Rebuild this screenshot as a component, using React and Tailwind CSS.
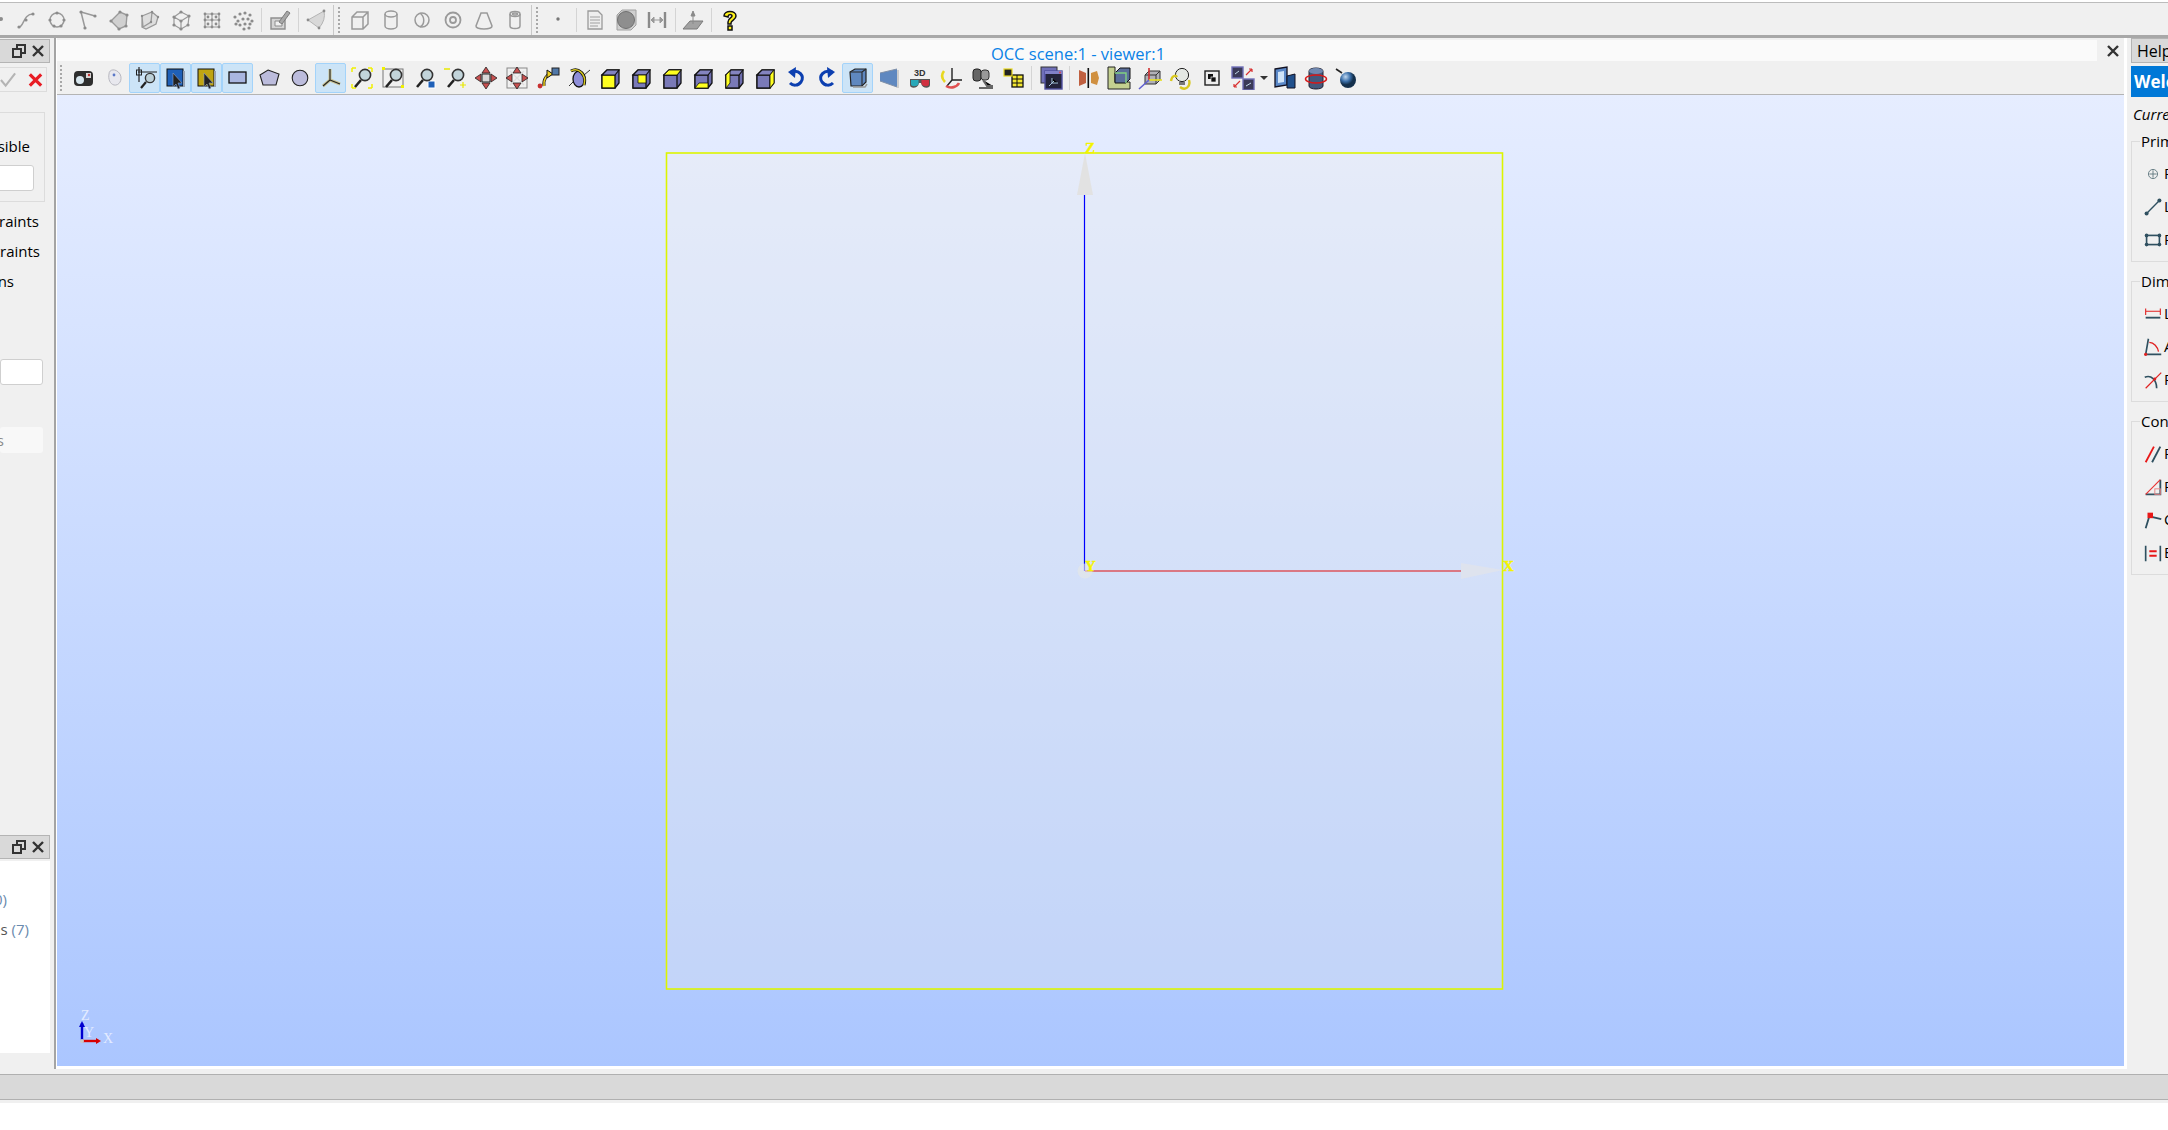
import React from 'react';

// Base wrapper for the 24px toolbar pictures
const Ico = ({ children, size = 24, className = '' }) => (
  <svg width={size} height={size} viewBox="0 0 24 24" className={className}>
    {children}
  </svg>
);

const Dots = ({ pts, fill = '#8c8c8c', r = 1.6 }) =>
  pts.map(([x, y], i) => <circle key={i} cx={x} cy={y} r={r} fill={fill} />);

const Mag = ({ children }) => (
  <Ico>
    {children}
    <line x1="5" y1="21" x2="11" y2="14" stroke="#222" strokeWidth="2.6" />
    <circle cx="15" cy="9" r="5.6" fill="#c2d4da" stroke="#333" strokeWidth="1.6" />
  </Ico>
);

const ViewCube = ({ hl, front = '#7a7ab8' }) => (
  <Ico>
    <path d="M4 9 L9 4 H21 V17 L17 22 H4 Z" fill="#6e6eae" stroke="#111" strokeWidth="1.3" />
    <rect x="4" y="9" width="13" height="13" fill={front} stroke="#111" strokeWidth="1.3" />
    <path d="M4 9 L9 4 H21 L17 9 Z" fill="#8484c0" stroke="#111" strokeWidth="1.1" />
    {hl && <path d={hl} fill="#ffff20" stroke="#111" strokeWidth="0.8" />}
  </Ico>
);

const Cursor = () => (
  <path d="M9 7 L9 21 L12 18 L14 23 L16 22 L14 17 L18 17 Z" fill="#222" stroke="#8fa3c8" strokeWidth="0.6" />
);

const grayLine = { stroke: '#9a9a9a', strokeWidth: 1.5, fill: 'none' };

// Disabled sketch and primitive tools on the main toolbar
const top = {
  dot: <Ico><circle cx="18" cy="11" r="2" fill="#8c8c8c" /></Ico>,
  spline: <Ico><path d="M5 19 C10 19 9 6 19 6" {...grayLine} /><Dots pts={[[5, 19], [12, 12], [19, 6]]} /></Ico>,
  circle: <Ico><circle cx="12" cy="12" r="7" {...grayLine} /><Dots pts={[[12, 5], [5, 12], [19, 12], [9, 18], [16, 18]]} /></Ico>,
  poly: <Ico><path d="M5 4 L9 20 M5 4 L19 8" {...grayLine} /><Dots pts={[[5, 4], [9, 20], [19, 8]]} /></Ico>,
  face: <Ico><path d="M4 13 L13 4 L20 7 L19 18 L12 21 Z" fill="#d0d0d0" stroke="#9a9a9a" strokeWidth="1.4" /><Dots pts={[[4, 13], [13, 4], [20, 7], [19, 18], [12, 21]]} /></Ico>,
  shell: <Ico><path d="M4 8 L14 4 L20 9 L18 16 L8 21 L4 19 Z M4 8 L5 19 M14 4 L13 14 L5 19" fill="#dedede" stroke="#9a9a9a" strokeWidth="1.3" /><Dots pts={[[4, 8], [14, 4], [20, 9], [13, 14]]} r={1.2} /></Ico>,
  solid: <Ico><path d="M5 9 L12 4 L20 8 L19 17 L12 21 L5 17 Z M5 9 L12 13 L20 8 M12 13 V21" {...grayLine} strokeWidth="1.2" /><Dots pts={[[5, 9], [12, 4], [20, 8], [19, 17], [12, 21], [5, 17], [12, 13]]} /></Ico>,
  comp: <Ico><path d="M5 6 H19 V19 H5 Z M5 12 H19 M12 6 V19" {...grayLine} strokeWidth="1.1" /><Dots pts={[[5, 6], [12, 6], [19, 6], [5, 12], [12, 12], [19, 12], [5, 19], [12, 19], [19, 19], [8, 9], [16, 9], [8, 16], [16, 16]]} r={1.4} /></Ico>,
  cloud: <Ico><Dots pts={[[4, 9], [9, 6], [14, 5], [19, 7], [7, 13], [12, 11], [17, 11], [21, 13], [9, 17], [14, 16], [19, 16], [13, 21], [18, 20], [5, 16]]} r={1.6} /></Ico>,
  edit: <Ico><path d="M3 10 H17 V21 H3 Z" fill="#d4d4d4" stroke="#8e8e8e" strokeWidth="1.4" /><path d="M7 13 H14 V18 H7 Z" fill="#f0f0f0" stroke="#8e8e8e" /><path d="M11 14 L19 3 L22 5 L14 16 Z" fill="#a8a8a8" stroke="#7c7c7c" /></Ico>,
  fan: <Ico><path d="M3 12 L19 3 Q21 12 14 20 Z" fill="#d8d8d8" stroke="#b4b4b4" /><Dots pts={[[3, 12], [19, 3], [14, 20]]} r={1.4} /></Ico>,
  box: <Ico><path d="M4 9 L9 4 H20 V16 L15 21 H4 Z M4 9 H15 V21 M15 9 L20 4" {...grayLine} /></Ico>,
  cyl: <Ico><ellipse cx="12" cy="6" rx="6" ry="3" {...grayLine} /><path d="M6 6 V18 A6 3 0 0 0 18 18 V6" {...grayLine} /></Ico>,
  sphere: <Ico><circle cx="12" cy="12" r="7" {...grayLine} /><path d="M10 5 C15 9 15 16 10 19" {...grayLine} /></Ico>,
  torus: <Ico><circle cx="12" cy="12" r="7.5" {...grayLine} strokeWidth="1.8" /><circle cx="12" cy="12" r="3" {...grayLine} strokeWidth="1.8" /></Ico>,
  cone: <Ico><path d="M9 5 H15 L20 18 A8 3 0 0 1 4 18 Z" {...grayLine} /></Ico>,
  tube: <Ico><ellipse cx="12" cy="6" rx="5" ry="2.5" {...grayLine} /><ellipse cx="12" cy="6" rx="2.5" ry="1" {...grayLine} /><path d="M7 6 V18 A5 2.5 0 0 0 17 18 V6" {...grayLine} /></Ico>,
  vertex: <Ico><circle cx="12" cy="11" r="1.7" fill="#777" /></Ico>,
  doc: <Ico><path d="M5 3 H15 L19 7 V21 H5 Z" fill="#eeeeee" stroke="#9a9a9a" strokeWidth="1.3" /><path d="M7 9 H17 M7 12 H17 M7 15 H17 M7 18 H15" stroke="#a0a0a0" /></Ico>,
  fit: <Ico><path d="M3 7 L8 2 H22 V17 L17 22 H3 Z" fill="#cfcfcf" stroke="#a0a0a0" /><circle cx="12" cy="12" r="8.5" fill="#8e8e8e" stroke="#707070" /></Ico>,
  dim: <Ico><path d="M4 4 V20 M20 4 V20" stroke="#8a8a8a" strokeWidth="2.4" /><path d="M6 12 H18 M6 12 L9 9 V15 Z M18 12 L15 9 V15 Z" stroke="#9a9a9a" fill="#9a9a9a" /></Ico>,
  plane: <Ico><path d="M2 21 L9 13 H22 L16 21 Z" fill="#a2a2a2" stroke="#7a7a7a" /><path d="M12 16 V5 M12 3 L10 8 H14 Z" stroke="#8a8a8a" fill="#8a8a8a" /></Ico>,
  help: <Ico><path d="M6 8 C6 2 18 2 18 8 C18 12 13 12 13 15 V16 H10 V14 C10 10 14 10 14 8 C14 6 10 6 10 9 Z M10 18 H14 V22 H10 Z" fill="#fff21a" stroke="#111" strokeWidth="1.5" /></Ico>,
};

// Icons of the 3D viewer toolbar
const view = {
  dump: <Ico><rect x="3" y="5" width="19" height="15" rx="4" fill="#2e2e2e" /><circle cx="9" cy="14" r="4" fill="#d7e6ee" /><rect x="15" y="7" width="5" height="5" fill="#d8d8d8" /><circle cx="18" cy="9" r="1.2" fill="#c03030" /></Ico>,
  mouse: <Ico><path d="M7 8 C7 3 14 2 18 8 C21 14 17 20 12 19 C8 18 6 13 7 8 Z" fill="#e8e8ee" stroke="#b8b8c0" /><circle cx="12" cy="9" r="1.4" fill="#5b78c8" /></Ico>,
  area: <Ico><path d="M5 6 H24 M6 1 V16" stroke="#222" strokeWidth="1.2" /><rect x="3.5" y="4" width="5" height="5" fill="none" stroke="#222" /><line x1="8" y1="22" x2="13" y2="16" stroke="#222" strokeWidth="2.2" /><circle cx="17" cy="12" r="4.6" fill="#bcd0d8" stroke="#333" strokeWidth="1.4" /></Ico>,
  selBlue: <Ico><rect x="3" y="3" width="16" height="17" fill="#1f60b8" stroke="#111" /><rect x="19" y="5" width="2" height="16" fill="#9aa4b4" /><Cursor /></Ico>,
  selGold: <Ico><rect x="3" y="3" width="16" height="17" fill="#bfa412" stroke="#111" /><rect x="19" y="5" width="2" height="16" fill="#9aa4b4" /><Cursor /></Ico>,
  rect: <Ico><rect x="3" y="6" width="17" height="11" fill="#a9b6e0" stroke="#111" strokeWidth="1.3" /></Ico>,
  penta: <Ico><path d="M11 4 L22 8 L19 19 H6 L3 9 Z" fill="#bcbcdc" stroke="#222" strokeWidth="1.1" /></Ico>,
  disk: <Ico><circle cx="12" cy="12" r="7.8" fill="#bcbcdc" stroke="#222" strokeWidth="1.1" /></Ico>,
  axes: <Ico><path d="M11 14 V3 M11 14 L21 18 M11 14 L4 20" stroke="#c8c090" strokeWidth="3" /><path d="M11 14 V3 M11 14 L21 18 M11 14 L4 20" stroke="#222" strokeWidth="1.1" /></Ico>,
  fitAll: <Mag><path d="M2 2 H6 M2 2 V6 M22 2 V6 M22 2 H18 M2 22 H6 M2 22 V18 M22 22 H18 M22 22 V18" stroke="#f0f000" strokeWidth="1.5" /></Mag>,
  fitSel: <Mag><rect x="2" y="3" width="20" height="18" fill="none" stroke="#777" /><path d="M1 1 H4 V4 H1 Z M20 19 H23 V22 H20 Z" fill="#f0f000" /></Mag>,
  fitBox: <Mag><rect x="16" y="15" width="7" height="7" fill="#1f60b8" stroke="#fff" /></Mag>,
  zoomPm: <Mag><path d="M1 3 H7" stroke="#e8e800" strokeWidth="1.5" /><path d="M17 19 H23 M20 16 V22" stroke="#e8e800" strokeWidth="1.2" /></Mag>,
  pan: <Ico><rect x="8" y="8" width="8" height="8" fill="#d8d8d8" stroke="#222" /><path d="M12 1 L16 7 H8 Z M12 23 L16 17 H8 Z M1 12 L7 8 V16 Z M23 12 L17 8 V16 Z" fill="#c85050" stroke="#222" strokeWidth="0.8" /></Ico>,
  panAll: <Ico><rect x="2" y="2" width="20" height="20" fill="none" stroke="#888" /><path d="M5 5 L19 19 M19 5 L5 19" stroke="#ddd" strokeWidth="1.4" /><path d="M12 1 L16 7 H8 Z M12 23 L16 17 H8 Z M1 12 L7 8 V16 Z M23 12 L17 8 V16 Z" fill="#c85050" stroke="#222" strokeWidth="0.8" /></Ico>,
  rotate: <Ico><path d="M8 20 C7 13 11 9 14 8" fill="none" stroke="#111" strokeWidth="3" /><path d="M8 20 C7 13 11 9 14 8" fill="none" stroke="#f0d020" strokeWidth="1.6" /><path d="M11 4 L17 8 L11 12 Z" fill="#f0d020" stroke="#111" /><circle cx="4" cy="20" r="2.4" fill="#c83030" /><rect x="16" y="2" width="7" height="7" fill="#5078a8" stroke="#222" /></Ico>,
  dynRot: <Ico><path d="M2 20 L7 15 M17 9 L23 4" stroke="#333" /><ellipse cx="12" cy="13" rx="6" ry="8" fill="#8e8ed8" stroke="#111" strokeWidth="1.3" /><path d="M4 5 C11 1 20 8 17 19" fill="none" stroke="#111" strokeWidth="3" /><path d="M4 5 C11 1 20 8 17 19" fill="none" stroke="#d8c820" strokeWidth="1.4" /></Ico>,
  front: <ViewCube front="#ffff20" />,
  back: <ViewCube hl="M9 9 H17 V17 H9 Z" />,
  ctop: <ViewCube hl="M4 9 L9 4 H21 L17 9 Z" />,
  bottom: <ViewCube hl="M4 22 L8 17 H17 V22 Z" />,
  left: <ViewCube hl="M4 9 L8 5 V17 L4 22 Z" />,
  right: <ViewCube hl="M17 9 L21 4 V17 L17 22 Z" />,
  undo: <Ico><path d="M7 6 C15 3 21 10 17 16 C14 20 9 20 6 17" fill="none" stroke="#0c3fb0" strokeWidth="3" /><path d="M12 1 L4 6 L11 12 Z" fill="#0c3fb0" /></Ico>,
  redo: <Ico><path d="M17 6 C9 3 3 10 7 16 C10 20 15 20 18 17" fill="none" stroke="#0c3fb0" strokeWidth="3" /><path d="M12 1 L20 6 L13 12 Z" fill="#0c3fb0" /></Ico>,
  ortho: <Ico><path d="M4 6 L9 3 H20 V16 L16 20 H5 Z" fill="#5f88c0" stroke="#222" strokeWidth="1.2" /><path d="M4 6 H16 V20 M16 6 L20 3" fill="none" stroke="#2a2a2a" strokeWidth="1.1" /><path d="M7 21 H19 L21 18" fill="none" stroke="#999" strokeWidth="1.5" /></Ico>,
  persp: <Ico><path d="M3 7 L20 3 V21 L3 15 Z" fill="#5f88c0" /><path d="M3 7 L20 3 M3 15 L20 21" stroke="#8090a8" /><path d="M21 4 V22" stroke="#aaa" /></Ico>,
  glasses: <Ico><path d="M2 13 H22 V19 C22 23 14 23 13 17 H11 C10 23 2 23 2 19 Z" fill="#555" /><path d="M3 14 H10.5 V18 C9 21 3 21 3 18 Z" fill="#28a8b8" /><path d="M13.5 14 H21 V18 C21 21 15 21 13.5 18 Z" fill="#d03040" /><text x="6" y="10" fontSize="9" fontWeight="700" fontFamily="Liberation Sans, sans-serif" fill="#333">3D</text></Ico>,
  axisRot: <Ico><path d="M13 2 V14 H23 M13 14 L8 20" fill="none" stroke="#222" strokeWidth="1.4" /><path d="M5 5 C2 9 3 13 6 16" fill="none" stroke="#e8d820" strokeWidth="2.6" /><path d="M7 20 C12 23 18 21 20 17" fill="none" stroke="#e05050" strokeWidth="2.6" /></Ico>,
  bino: <Ico><rect x="3" y="3" width="8" height="12" rx="3" fill="#666" stroke="#222" /><rect x="11" y="4" width="8" height="10" rx="3" fill="#999" stroke="#333" /><path d="M13 14 L17 20 H23 M9 22 H23" stroke="#666" strokeWidth="2" /></Ico>,
  table: <Ico><rect x="11" y="9" width="11" height="12" fill="#f4e830" stroke="#111" strokeWidth="1.3" /><path d="M11 13 H22 M11 17 H22 M16 9 V21" stroke="#111" /><rect x="3" y="3" width="8" height="7" fill="#222" stroke="#e8d820" strokeWidth="1.2" /></Ico>,
  wins: <Ico><rect x="2" y="1" width="16" height="16" fill="#7070b8" stroke="#333" /><rect x="6" y="5" width="17" height="18" fill="#23233a" stroke="#5050a0" strokeWidth="1.4" /><rect x="6" y="5" width="17" height="3" fill="#8080c8" /><circle cx="21" cy="6.5" r="0.9" fill="#e04040" /><path d="M10 20 L15 15 M13 12 V17 H19" stroke="#a8c8e0" /></Ico>,
  clip: <Ico><path d="M3 4 L10 7 V17 L3 20 Z" fill="#c06040" /><path d="M15 7 L21 5 L23 12 L21 19 L15 17 Z" fill="#d09040" /><rect x="11.5" y="2" width="1.6" height="20" fill="#111" /></Ico>,
  ruler: <Ico><path d="M1 1 H8 V16 H23 V23 H1 Z" fill="#c4d090" stroke="#222" /><path d="M8 7 L13 2 H23 V13 L19 17 H8 Z" fill="#5a6e9a" stroke="#111" /><path d="M8 7 H19 V17" fill="none" stroke="#80d080" strokeWidth="1.4" /></Ico>,
  axCube: <Ico><path d="M7 9 H18 V18 H7 Z M7 9 L11 5 H22 V14 L18 18 M18 9 L22 5" fill="#b0b0b8" stroke="#333" /><path d="M11 14 V2" stroke="#d03030" strokeWidth="1.6" /><path d="M11 14 H24" stroke="#e8e020" strokeWidth="1.6" /><path d="M11 14 L1 23" stroke="#6060d0" strokeWidth="1.6" /></Ico>,
  bulb: <Ico><circle cx="13" cy="9" r="6.6" fill="#e4e8e4" stroke="#222" /><path d="M10 16 H16 V19 H10 Z" fill="#777" /><path d="M2 15 C3 9 7 9 8 11 M11 21 C16 25 22 21 20 14" fill="none" stroke="#d8c820" strokeWidth="2.4" /></Ico>,
  small: <Ico><rect x="5" y="5" width="14" height="14" fill="#eee" stroke="#222" strokeWidth="1.4" /><rect x="8" y="8" width="5" height="5" fill="#111" /><rect x="11" y="11" width="5" height="5" fill="#111" stroke="#eee" strokeWidth="0.7" /></Ico>,
  tile: <Ico><rect x="1" y="1" width="11" height="11" fill="#3a3a58" stroke="#7070b8" strokeWidth="1.4" /><rect x="12" y="13" width="11" height="11" fill="#3a3a58" stroke="#7070b8" strokeWidth="1.4" /><path d="M15 9 L21 3 M21 3 H18 M21 3 V6 M3 21 L9 15 M3 21 H6 M3 21 V18" stroke="#d83030" strokeWidth="1.2" /><path d="M4 8 L8 5 M15 20 L20 17" stroke="#c0d8e8" /></Ico>,
  panels: <Ico><path d="M2 3 L14 1 V19 L2 21 Z" fill="#5a88c8" stroke="#112" strokeWidth="1.3" /><path d="M5 6 L11 5 V16 L5 17 Z" fill="#d0e4f8" /><path d="M14 10 L22 8 V22 L14 22 Z" fill="#20508c" stroke="#112" /></Ico>,
  ring: <Ico><path d="M5 5 C5 1 19 1 19 5 V20 C19 24 5 24 5 20 Z" fill="#44597c" stroke="#223" /><ellipse cx="12" cy="5" rx="7" ry="3" fill="#7088b0" /><ellipse cx="12" cy="13" rx="10.5" ry="4" fill="none" stroke="#d81818" strokeWidth="1.5" /></Ico>,
  ball: <Ico><path d="M1 3 L7 7" stroke="#222" strokeWidth="1.6" /><defs><radialGradient id="ballShade" cx="0.35" cy="0.3"><stop offset="0" stopColor="#c0d8f0" /><stop offset="0.6" stopColor="#3a6ea8" /><stop offset="1" stopColor="#14304c" /></radialGradient></defs><circle cx="13" cy="14" r="8" fill="url(#ballShade)" /></Ico>,
};

const Btn = ({ active, children }) => (
  <div className={`w-[31px] h-[30px] shrink-0 flex items-center justify-center rounded-[2px] border ${active ? 'bg-[#cce4f7] border-[#a3d3fa]' : 'border-transparent'}`}>
    {children}
  </div>
);

const Sep = ({ w = 'w-[6px]' }) => (
  <div className={`${w} shrink-0 flex justify-center`}>
    <div className="w-px h-[24px] bg-[#d4d4d4]" />
  </div>
);

const Grip = () => (
  <div className="w-[2px] h-[26px] shrink-0 border-l-2 border-dotted border-[#a8a8a8]" />
);

// Qt style tear-off between toolbars
const Break = ({ w }) => (
  <div className={`${w} h-full shrink-0 border-l border-[#c8c8c8] flex items-center pl-[4px]`}>
    <Grip />
  </div>
);

const DockHead = () => (
  <div className="w-[50px] h-[24px] shrink-0 bg-[#d9d9d9] border border-l-0 border-[#b4b4b4] flex items-center justify-end gap-[5px] pr-[4px]">
    <svg width="14" height="14" viewBox="0 0 14 14" fill="none" stroke="#333" strokeWidth="2">
      <rect x="1" y="5" width="8" height="8" />
      <path d="M5 5 V1 H13 V9 H9" />
    </svg>
    <svg width="14" height="14" viewBox="0 0 14 14" stroke="#333" strokeWidth="2.4">
      <path d="M2 2 L12 12 M12 2 L2 12" />
    </svg>
  </div>
);

const LeftRow = ({ pad, children }) => (
  <div className={`h-[30px] flex items-center justify-end whitespace-nowrap ${pad}`}>{children}</div>
);

const dk = '#2f5060';
const side = {
  point: <Ico size={22}><circle cx="12" cy="12" r="5" fill="none" stroke="#607880" /><path d="M12 8 V16 M8 12 H16" stroke="#607880" /></Ico>,
  line: <Ico size={22}><path d="M5 19 L19 5" stroke={dk} strokeWidth="1.5" /><circle cx="5" cy="19" r="2.2" fill={dk} /><circle cx="19" cy="5" r="2.2" fill={dk} /></Ico>,
  rect: <Ico size={22}><rect x="5" y="7" width="14" height="10" fill="none" stroke={dk} strokeWidth="1.8" /><Dots pts={[[5, 7], [19, 7], [5, 17], [19, 17]]} fill={dk} r={2} /></Ico>,
  len: <Ico size={22}><path d="M4 16 H20" stroke={dk} strokeWidth="2" /><path d="M4 6 V13 M20 6 V13 M4 9 H20" stroke="#e02020" strokeWidth="1.2" /></Ico>,
  angle: <Ico size={22}><path d="M7 3 L4 20 H21" fill="none" stroke={dk} strokeWidth="1.8" /><path d="M8 7 C13 7 17 12 18 17" fill="none" stroke="#e02020" strokeWidth="1.4" /><circle cx="4" cy="20" r="1.8" fill="#e02020" /></Ico>,
  radius: <Ico size={22}><path d="M3 9 C10 6 16 12 16 21" fill="none" stroke={dk} strokeWidth="1.8" /><path d="M4 21 L21 4" stroke="#e02020" strokeWidth="1.3" /><circle cx="14" cy="11" r="1.6" fill="#e02020" /></Ico>,
  para: <Ico size={22}><path d="M4 21 L13 4" stroke="#e81818" strokeWidth="2" /><path d="M11 21 L20 4" stroke={dk} strokeWidth="2" /></Ico>,
  perp: <Ico size={22}><path d="M4 20 H20 V4" fill="none" stroke={dk} strokeWidth="2" /><path d="M4 20 L20 4" stroke="#e83030" strokeWidth="1.2" /><rect x="14" y="14" width="6" height="6" fill="none" stroke="#e88080" /></Ico>,
  coin: <Ico size={22}><path d="M4 21 L8 8 L21 11" fill="none" stroke={dk} strokeWidth="2" /><rect x="6" y="4" width="6" height="6" fill="#e81818" /></Ico>,
  equal: <Ico size={22}><path d="M4 4 V21 M20 4 V21" stroke={dk} strokeWidth="1.8" /><path d="M8 10 H16 M8 15 H16" stroke="#e81818" strokeWidth="2.2" /></Ico>,
};

const SideGroup = ({ title, rows }) => (
  <fieldset className="w-[60px] border border-[#dcdcdc] pt-[6px] pb-[5px] mb-[9px]">
    <legend className="ml-[8px] px-px h-[20px] leading-[20px] whitespace-nowrap">{title}</legend>
    {rows.map(([icon, label]) => (
      <div key={label} className="h-[33px] flex items-center whitespace-nowrap pl-[10px]">
        <div className="w-[22px] shrink-0 flex justify-center">{icon}</div>
        <span>{label}</span>
      </div>
    ))}
  </fieldset>
);

export default function App() {
  return (
    <div className="w-[2168px] h-[1130px] overflow-hidden bg-white font-['Open_Sans',sans-serif] text-[15px] text-black flex flex-col">
      {/* main toolbar */}
      <div className="h-[36px] shrink-0 bg-[#f0f0f0] border-t border-b-[3px] border-t-[#bcbcbc] border-b-[#a8a8a8] mt-[2px] pt-[2px] flex items-center overflow-hidden">
        <div className="flex items-center h-full ml-[-20.5px]">
          <Btn>{top.dot}</Btn>
          <Btn>{top.spline}</Btn>
          <Btn>{top.circle}</Btn>
          <Btn>{top.poly}</Btn>
          <Btn>{top.face}</Btn>
          <Btn>{top.shell}</Btn>
          <Btn>{top.solid}</Btn>
          <Btn>{top.comp}</Btn>
          <Btn>{top.cloud}</Btn>
          <Sep />
          <Btn>{top.edit}</Btn>
          <Sep />
          <Btn>{top.fan}</Btn>
          <Break w="w-[12px]" />
          <Btn>{top.box}</Btn>
          <Btn>{top.cyl}</Btn>
          <Btn>{top.sphere}</Btn>
          <Btn>{top.torus}</Btn>
          <Btn>{top.cone}</Btn>
          <Btn>{top.tube}</Btn>
          <Break w="w-[12px]" />
          <Btn>{top.vertex}</Btn>
          <Sep />
          <Btn>{top.doc}</Btn>
          <Btn>{top.fit}</Btn>
          <Btn>{top.dim}</Btn>
          <Sep w="w-[5px]" />
          <Btn>{top.plane}</Btn>
          <Sep />
          <Btn>{top.help}</Btn>
        </div>
      </div>

      <div className="h-[1036px] shrink-0 bg-[#f0f0f0] flex">
        {/* sketch and object browser docks */}
        <div className="w-[54px] shrink-0 flex flex-col pt-px overflow-hidden">
          <DockHead />
          <div className="w-[47px] h-[25px] mt-[4px] shrink-0 border border-l-0 border-[#dcdcdc] flex items-center justify-end gap-[10px] pr-[2px]">
            <svg width="18" height="18" viewBox="0 0 18 18" fill="none" stroke="#b4b4b4" strokeWidth="2.2">
              <path d="M1 9 L6 15 L16 2" />
            </svg>
            <svg width="18" height="18" viewBox="0 0 18 18" stroke="#e81c24" strokeWidth="3.4">
              <path d="M3 3 L15 15 M15 3 L3 15" />
            </svg>
          </div>
          <div className="w-[45px] h-[90px] mt-[20px] shrink-0 border border-l-0 border-[#dcdcdc] flex flex-col items-end pr-[10px]">
            <div className="h-[20px] mt-[23px] flex items-center whitespace-nowrap pr-[4px]">All visible</div>
            <div className="w-[40px] h-[26px] mt-[9px] bg-white border border-[#cfcfcf] rounded-[3px]" />
          </div>
          <div className="mt-[4px] w-[54px]">
            <LeftRow pad="pr-[15px]">Show constraints</LeftRow>
            <LeftRow pad="pr-[14px]">Hide constraints</LeftRow>
            <LeftRow pad="pr-[40px]">Dimensions</LeftRow>
          </div>
          <div className="w-[43px] h-[26px] mt-[63px] shrink-0 bg-white border border-[#cfcfcf] rounded-[3px]" />
          <div className="w-[43px] h-[26px] mt-[42px] shrink-0 bg-[#f8f8f8] rounded-[3px] flex items-center justify-end pr-[39px] text-[#8a8a8a] whitespace-nowrap">Options</div>
          <div className="mt-[382px]"><DockHead /></div>
          <div className="w-[50px] h-[192px] mt-[2px] shrink-0 bg-white pt-[23px] text-[#555] overflow-hidden">
            <div className="h-[30px] flex items-center justify-end whitespace-nowrap pr-[43px]">Solids (<span className="text-[#6a8aae]">0)</span></div>
            <div className="h-[30px] flex items-center justify-end whitespace-nowrap pr-[21px]">Faces <span className="text-[#6a8aae] ml-1">(7)</span></div>
          </div>
        </div>

        {/* 3D viewer */}
        <div className="h-[1031px] flex shrink-0">
          <div className="w-[2px] bg-[#a4a4a4]" />
          <div className="w-[2071px] border-l border-r-[3px] border-b-[3px] border-white flex flex-col">
            <div className="h-[23px] shrink-0 bg-[#f0f0f0] flex pt-[2px]">
              <div className="w-[2040px] bg-[#fafafa] text-center text-[#0a82e6] text-[16.5px] leading-[20px] pt-[4px] pl-[2px]">OCC scene:1 - viewer:1</div>
              <div className="flex-1 flex items-center justify-center pl-[4px]">
                <svg width="14" height="14" viewBox="0 0 14 14" stroke="#333" strokeWidth="2.4">
                  <path d="M2 2 L12 12 M12 2 L2 12" />
                </svg>
              </div>
            </div>
            <div className="h-[34px] shrink-0 bg-[#f0f0f0] border-b border-[#b4b4b4] flex items-center pl-[3px]">
              <div className="w-[7px] shrink-0"><Grip /></div>
              <Btn>{view.dump}</Btn>
              <Btn>{view.mouse}</Btn>
              <Btn active>{view.area}</Btn>
              <Btn active>{view.selBlue}</Btn>
              <Btn active>{view.selGold}</Btn>
              <Btn active>{view.rect}</Btn>
              <Btn>{view.penta}</Btn>
              <Btn>{view.disk}</Btn>
              <Btn active>{view.axes}</Btn>
              <Btn>{view.fitAll}</Btn>
              <Btn>{view.fitSel}</Btn>
              <Btn>{view.fitBox}</Btn>
              <Btn>{view.zoomPm}</Btn>
              <Btn>{view.pan}</Btn>
              <Btn>{view.panAll}</Btn>
              <Btn>{view.rotate}</Btn>
              <Btn>{view.dynRot}</Btn>
              <Btn>{view.front}</Btn>
              <Btn>{view.back}</Btn>
              <Btn>{view.ctop}</Btn>
              <Btn>{view.bottom}</Btn>
              <Btn>{view.left}</Btn>
              <Btn>{view.right}</Btn>
              <Btn>{view.undo}</Btn>
              <Btn>{view.redo}</Btn>
              <Btn active>{view.ortho}</Btn>
              <Btn>{view.persp}</Btn>
              <Btn>{view.glasses}</Btn>
              <Btn>{view.axisRot}</Btn>
              <Btn>{view.bino}</Btn>
              <Btn>{view.table}</Btn>
              <Sep w="w-[7px]" />
              <Btn>{view.wins}</Btn>
              <Sep />
              <Btn>{view.clip}</Btn>
              <Btn>{view.ruler}</Btn>
              <Btn>{view.axCube}</Btn>
              <Btn>{view.bulb}</Btn>
              <Btn>{view.small}</Btn>
              <Btn>{view.tile}</Btn>
              <div className="w-[11px] shrink-0 flex justify-center">
                <div className="border-x-[4px] border-x-transparent border-t-[4px] border-t-[#333]" />
              </div>
              <Btn>{view.panels}</Btn>
              <Btn>{view.ring}</Btn>
              <Btn>{view.ball}</Btn>
            </div>
            <div className="flex-1 min-h-0 bg-gradient-to-b from-[#e6edff] to-[#abc6ff]">
              {/* scene: working plane and trihedrons, in window coordinates */}
              <svg width="2068" height="971" viewBox="57 95 2068 971" className="block">
                <rect x="666.5" y="153" width="836" height="836" fill="#f0f0ec" fillOpacity="0.3" stroke="#dcf500" strokeWidth="1.6" />
                <line x1="1084.5" y1="195" x2="1084.5" y2="571" stroke="#0000ff" strokeWidth="1.2" />
                <line x1="1085" y1="571" x2="1461" y2="571" stroke="#e01010" strokeWidth="1.2" />
                <path d="M1085 153 L1093 195 H1077 Z" fill="#e2e2e2" />
                <path d="M1461 563 L1503 570 L1461 579 Z" fill="#e2e4ea" fillOpacity="0.7" />
                <circle cx="1085" cy="571" r="7.5" fill="#e6e8e4" fillOpacity="0.6" />
                <g fontFamily="Liberation Serif, serif" fontWeight="700" fontSize="15" fill="#f4f400" stroke="#f4f400" strokeWidth="0.4">
                  <text x="1085" y="153">Z</text>
                  <text x="1085" y="571">Y</text>
                  <text x="1503" y="571">X</text>
                </g>
                <line x1="82" y1="1040" x2="82" y2="1023" stroke="#0000d0" strokeWidth="2.4" />
                <path d="M82 1021 L85 1027 H79 Z" fill="#0000d0" />
                <line x1="82" y1="1041" x2="98" y2="1041" stroke="#d80000" strokeWidth="2.4" />
                <path d="M101 1041 L96 1038 V1044 Z" fill="#d80000" />
                <circle cx="82" cy="1041" r="2" fill="#c8c8c8" />
                <g fontFamily="Liberation Serif, serif" fontSize="14" fill="#e4ecff">
                  <text x="81" y="1020">Z</text>
                  <text x="84" y="1037">Y</text>
                  <text x="103" y="1043">X</text>
                </g>
              </svg>
            </div>
          </div>
        </div>

        {/* help panel */}
        <div className="flex-1 min-w-0 pl-[4px] overflow-hidden">
          <div className="w-[60px] h-[25px] bg-[#d9d9d9] border border-[#b4b4b4] pl-[5px] leading-[24px] text-[16px]">Help</div>
          <div className="w-[60px] h-[31px] mt-[3px] bg-[#0078d7] text-white font-bold text-[17px] leading-[31px] pl-[3px] whitespace-nowrap">Welcome</div>
          <div className="h-[34px] leading-[34px] italic whitespace-nowrap pl-[2px]">Current</div>
          <SideGroup title="Primitives" rows={[[side.point, 'Point'], [side.line, 'Line'], [side.rect, 'Rectangle']]} />
          <SideGroup title="Dimensions" rows={[[side.len, 'Length'], [side.angle, 'Angle'], [side.radius, 'Radius']]} />
          <SideGroup title="Constraints" rows={[[side.para, 'Parallel'], [side.perp, 'Perpendicular'], [side.coin, 'Coincident'], [side.equal, 'Equal']]} />
        </div>
      </div>

      {/* status bar */}
      <div className="h-[26px] shrink-0 bg-[#d9d9d9] border-y border-[#b0b0b0]" />
      <div className="h-[3px] shrink-0 bg-[#f0f0f0]" />
    </div>
  );
}
